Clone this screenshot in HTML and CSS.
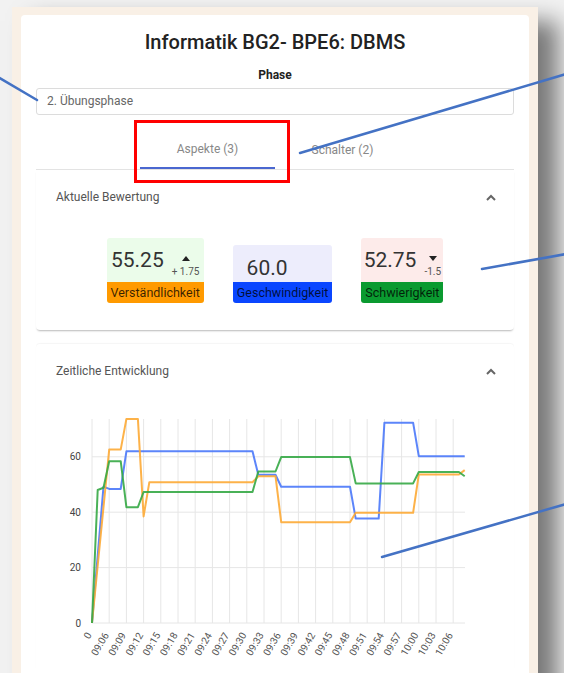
FILE: index.html
```html
<!DOCTYPE html>
<html lang="de">
<head>
<meta charset="utf-8">
<title>Informatik BG2- BPE6: DBMS</title>
<link rel="stylesheet" href="styles.css">
</head>
<body>
<div class="frame">
  <div class="card">
    <h1 class="title">Informatik BG2- BPE6: DBMS</h1>
    <div class="phase-label">Phase</div>
    <div class="phase-input">2. Übungsphase</div>
    <div class="tabs">
      <div class="tab active">Aspekte (3)</div>
      <div class="tab">Schalter (2)</div>
    </div>

    <section class="panel panel-current">
      <div class="panel-head">
        <span>Aktuelle Bewertung</span>
        <svg class="chev" width="10" height="7" viewBox="0 0 10 7"><polyline points="1,6 5,2 9,6"/></svg>
      </div>
      <div class="metrics">
        <div class="metric m-green">
          <div class="m-top">
            <span class="m-val">55.25</span>
            <span class="m-delta"><span class="tri up"></span><span class="d-text">+ 1.75</span></span>
          </div>
          <div class="m-label l-orange">Verständlichkeit</div>
        </div>
        <div class="metric m-blue">
          <div class="m-top m-top-short">
            <span class="m-val">60.0</span>
            <span class="m-delta m-delta-empty"></span>
          </div>
          <div class="m-label l-blue">Geschwindigkeit</div>
        </div>
        <div class="metric m-red">
          <div class="m-top">
            <span class="m-val">52.75</span>
            <span class="m-delta"><span class="tri down"></span><span class="d-text">-1.5</span></span>
          </div>
          <div class="m-label l-green">Schwierigkeit</div>
        </div>
      </div>
    </section>

    <section class="panel panel-chart">
      <div class="panel-head">
        <span>Zeitliche Entwicklung</span>
        <svg class="chev" width="10" height="7" viewBox="0 0 10 7"><polyline points="1,6 5,2 9,6"/></svg>
      </div>
      <svg class="chart" width="478" height="272" viewBox="36 398 478 272">
        <path class="grid" d="M92 419V623M109.2 419V623M126.4 419V623M143.6 419V623M160.8 419V623M178 419V623M195.2 419V623M212.4 419V623M229.6 419V623M246.8 419V623M264 419V623M281.2 419V623M298.4 419V623M315.6 419V623M332.8 419V623M350 419V623M367.2 419V623M384.4 419V623M401.6 419V623M418.8 419V623M436 419V623M453.2 419V623"/>
        <path class="grid" d="M92 623H465M92 567.6H465M92 512.2H465M92 456.8H465"/>
        <g class="ylab">
          <text x="81" y="626.5">0</text>
          <text x="81" y="571">20</text>
          <text x="81" y="515.7">40</text>
          <text x="81" y="460.3">60</text>
        </g>
        <g class="xlab">
          <text x="92" y="635" transform="rotate(-60 92 635)">0</text>
          <text x="109.2" y="635" transform="rotate(-60 109.2 635)">09:06</text>
          <text x="126.4" y="635" transform="rotate(-60 126.4 635)">09:09</text>
          <text x="143.6" y="635" transform="rotate(-60 143.6 635)">09:12</text>
          <text x="160.8" y="635" transform="rotate(-60 160.8 635)">09:15</text>
          <text x="178" y="635" transform="rotate(-60 178 635)">09:18</text>
          <text x="195.2" y="635" transform="rotate(-60 195.2 635)">09:21</text>
          <text x="212.4" y="635" transform="rotate(-60 212.4 635)">09:24</text>
          <text x="229.6" y="635" transform="rotate(-60 229.6 635)">09:27</text>
          <text x="246.8" y="635" transform="rotate(-60 246.8 635)">09:30</text>
          <text x="264" y="635" transform="rotate(-60 264 635)">09:33</text>
          <text x="281.2" y="635" transform="rotate(-60 281.2 635)">09:36</text>
          <text x="298.4" y="635" transform="rotate(-60 298.4 635)">09:39</text>
          <text x="315.6" y="635" transform="rotate(-60 315.6 635)">09:42</text>
          <text x="332.8" y="635" transform="rotate(-60 332.8 635)">09:45</text>
          <text x="350" y="635" transform="rotate(-60 350 635)">09:48</text>
          <text x="367.2" y="635" transform="rotate(-60 367.2 635)">09:51</text>
          <text x="384.4" y="635" transform="rotate(-60 384.4 635)">09:54</text>
          <text x="401.6" y="635" transform="rotate(-60 401.6 635)">09:57</text>
          <text x="418.8" y="635" transform="rotate(-60 418.8 635)">10:00</text>
          <text x="436" y="635" transform="rotate(-60 436 635)">10:03</text>
          <text x="453.2" y="635" transform="rotate(-60 453.2 635)">10:06</text>
        </g>
        <polyline class="ln ln-blue" points="92,623 103.5,486.7 109.2,488.9 120.7,488.9 126.4,451.3 252.5,451.3 258.3,474.8 275.5,474.8 281.2,486.7 350,486.7 355.7,518.6 378.7,518.6 384.4,422.7 413.1,422.7 418.8,456.2 464.7,456.2"/>
        <polyline class="ln ln-orange" points="92,623 109.2,449.6 120.7,449.6 126.4,418.9 137.9,418.9 143.6,516.4 149.3,482.3 252.5,482.3 258.3,476.2 275.5,476.2 281.2,522.2 350,522.2 355.7,512.8 413.1,512.8 418.8,474.5 458.9,474.5 464.7,470.1"/>
        <polyline class="ln ln-green" points="92,623 97.7,490 103.5,487.8 109.2,461.2 120.7,461.2 126.4,507.2 137.9,507.2 143.6,492 252.5,492 258.3,471.5 275.5,471.5 281.2,457.1 350,457.1 355.7,483.4 413.1,483.4 418.8,472 458.9,472 464.7,476.2"/>
      </svg>
    </section>
  </div>
</div>

<svg class="annot" width="564" height="673" viewBox="0 0 564 673">
  <rect x="135.5" y="121.5" width="153" height="60" fill="none" stroke="#ff0000" stroke-width="3"/>
  <g stroke="#4472c4" stroke-width="2.5" stroke-linecap="round">
    <line x1="-2" y1="77" x2="37" y2="100"/>
    <line x1="566" y1="74" x2="300" y2="153"/>
    <line x1="482" y1="269" x2="566" y2="254"/>
    <line x1="382" y1="557" x2="566" y2="504"/>
  </g>
</svg>
</body>
</html>
```

FILE: styles.css
```css
html, body {
  margin: 0;
  height: 100%;
  overflow: hidden;
}

body {
  position: relative;
  background: #f2f2f2;
  font-family: Roboto, "Noto Sans", "Liberation Sans", sans-serif;
}

.frame {
  margin: 7px 26px 0 12px;
  padding: 8px 9px 0;
  background: #f9f0e6;
  min-height: 720px;
  box-shadow: 20px 14px 22px rgba(0, 0, 0, 0.5);
}

.card {
  background: #fff;
  border-radius: 4px 4px 0 0;
  padding: 15px 15px 0;
  min-height: 700px;
  box-sizing: border-box;
}

.title {
  margin: 0;
  font-size: 20px;
  line-height: 24px;
  font-weight: 500;
  color: #222;
  text-align: center;
}

.phase-label {
  margin-top: 13px;
  font-size: 12px;
  line-height: 16px;
  font-weight: 700;
  color: #222;
  text-align: center;
}

.phase-input {
  margin-top: 5px;
  height: 27px;
  box-sizing: border-box;
  border: 1px solid #dcdcdc;
  border-radius: 3px;
  padding: 0 10px;
  font-size: 12px;
  line-height: 25px;
  color: #666;
}

.tabs {
  display: flex;
  justify-content: center;
  margin-top: 6px;
  border-bottom: 1px solid #e3e3e3;
}

.tab {
  width: 135px;
  height: 48px;
  box-sizing: border-box;
  display: flex;
  align-items: center;
  justify-content: center;
  padding-top: 10px;
  font-size: 12px;
  color: #888;
}

.tab.active {
  border-bottom: 2px solid #4a67d0;
}

.panel {
  background: #fff;
}

.panel-current {
  border-radius: 0 0 4px 4px;
  box-shadow: 0 2px 2px -1px rgba(0, 0, 0, 0.28);
}

.panel-chart {
  margin-top: 14px;
  border-radius: 4px 4px 0 0;
  box-shadow: 0 -1px 1px rgba(0, 0, 0, 0.04);
}

.panel-head {
  height: 54px;
  display: flex;
  align-items: center;
  justify-content: space-between;
  padding: 0 18px 0 20px;
  font-size: 12px;
  color: #555;
}

.chev polyline {
  fill: none;
  stroke: #666;
  stroke-width: 2;
}

.metrics {
  display: flex;
  justify-content: center;
  align-items: flex-end;
  gap: 29px;
  padding: 14px 0 27px;
}

.metric {
  display: flex;
  flex-direction: column;
  border-radius: 3px;
  overflow: hidden;
}

.m-green { background: #ebfcea; }
.m-blue { background: #ededfc; }
.m-red { background: #fdebea; }

.m-top {
  display: flex;
  justify-content: center;
  align-items: center;
  height: 44px;
}

.m-top-short {
  height: 37px;
  box-sizing: border-box;
  padding-top: 8px;
}

.m-val {
  font-size: 21px;
  line-height: 24px;
  color: #333;
}

.m-delta {
  display: flex;
  flex-direction: column;
  align-items: center;
  margin-left: 8px;
  padding-top: 14px;
}

.m-delta-empty {
  width: 23px;
}

.tri {
  width: 0;
  height: 0;
  border-left: 4px solid transparent;
  border-right: 4px solid transparent;
  margin-bottom: 5px;
}

.tri.up { border-bottom: 5px solid #222; }
.tri.down { border-top: 5px solid #222; }

.d-text {
  font-size: 10px;
  line-height: 12px;
  color: #555;
  align-self: flex-end;
}

.m-label {
  height: 21px;
  line-height: 21px;
  padding: 0 4px;
  font-size: 12.5px;
  text-align: center;
  color: rgba(0, 0, 0, 0.78);
  white-space: nowrap;
}

.l-orange { background: #ff9a00; }
.l-blue { background: #0a46ff; }
.l-green { background: #0a9a30; }

.chart {
  display: block;
}

.grid {
  fill: none;
  stroke: #e6e6e6;
  stroke-width: 1;
}

.ylab text {
  font-size: 10px;
  fill: #444;
  text-anchor: end;
}

.xlab text {
  font-size: 10px;
  fill: #555;
  text-anchor: end;
}

.ln {
  fill: none;
  stroke-width: 2;
  stroke-linejoin: round;
  opacity: 0.9;
}

.ln-blue { stroke: #4a78fa; }
.ln-orange { stroke: #fdaa35; }
.ln-green { stroke: #35a845; }

.annot {
  position: absolute;
  left: 0;
  top: 0;
  pointer-events: none;
}
```
